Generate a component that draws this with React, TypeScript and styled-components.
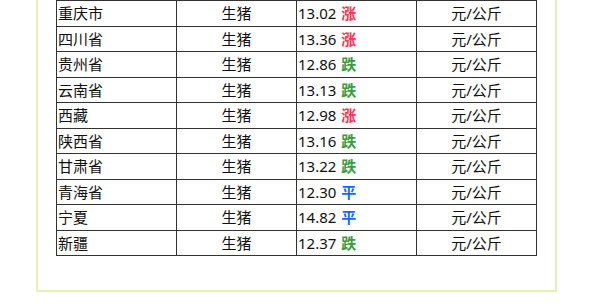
import React from "react";
import styled, { createGlobalStyle } from "styled-components";

const Global = createGlobalStyle`
  html, body { margin: 0; padding: 0; background: #fff; }
  body { font-family: "Noto Sans", "Noto Sans CJK SC", sans-serif; }
`;

const Box = styled.div`
  box-sizing: border-box;
  margin-left: 36px;
  width: 521px;
  border: 2px solid #e6f0b6;
  border-top: none;
  padding: 0 18px 34px;
`;

const Table = styled.table`
  border-collapse: collapse;
  table-layout: fixed;
  width: 481px;
  font-size: 15px;
  color: #111;
`;

const Row = styled.tr`
  height: 25.5px;
`;

const Cell = styled.td<{ $align?: "left" | "center" }>`
  border: 1px solid #333;
  padding: 0 1px;
  text-align: ${(p) => p.$align ?? "left"};
  vertical-align: middle;
  line-height: 20px;
  white-space: nowrap;
`;

const Trend = styled.span<{ $c: string }>`
  color: ${(p) => p.$c};
  font-weight: bold;
  margin-left: 5px;
`;

type Kind = "涨" | "跌" | "平";
const colors: Record<Kind, string> = { 涨: "#ff3355", 跌: "#3d9b3d", 平: "#1466ff" };

const rows: [string, string, Kind][] = [
  ["重庆市", "13.02", "涨"],
  ["四川省", "13.36", "涨"],
  ["贵州省", "12.86", "跌"],
  ["云南省", "13.13", "跌"],
  ["西藏", "12.98", "涨"],
  ["陕西省", "13.16", "跌"],
  ["甘肃省", "13.22", "跌"],
  ["青海省", "12.30", "平"],
  ["宁夏", "14.82", "平"],
  ["新疆", "12.37", "跌"],
];

export default function App() {
  return (
    <>
      <Global />
      <Box>
        <Table>
          <colgroup>
            <col style={{ width: 120 }} />
            <col style={{ width: 120 }} />
            <col style={{ width: 120 }} />
            <col style={{ width: 120 }} />
          </colgroup>
          <tbody>
            {rows.map(([region, price, kind]) => (
              <Row key={region}>
                <Cell>{region}</Cell>
                <Cell $align="center">生猪</Cell>
                <Cell>
                  {price}
                  <Trend $c={colors[kind]}>{kind}</Trend>
                </Cell>
                <Cell $align="center">元/公斤</Cell>
              </Row>
            ))}
          </tbody>
        </Table>
      </Box>
    </>
  );
}
